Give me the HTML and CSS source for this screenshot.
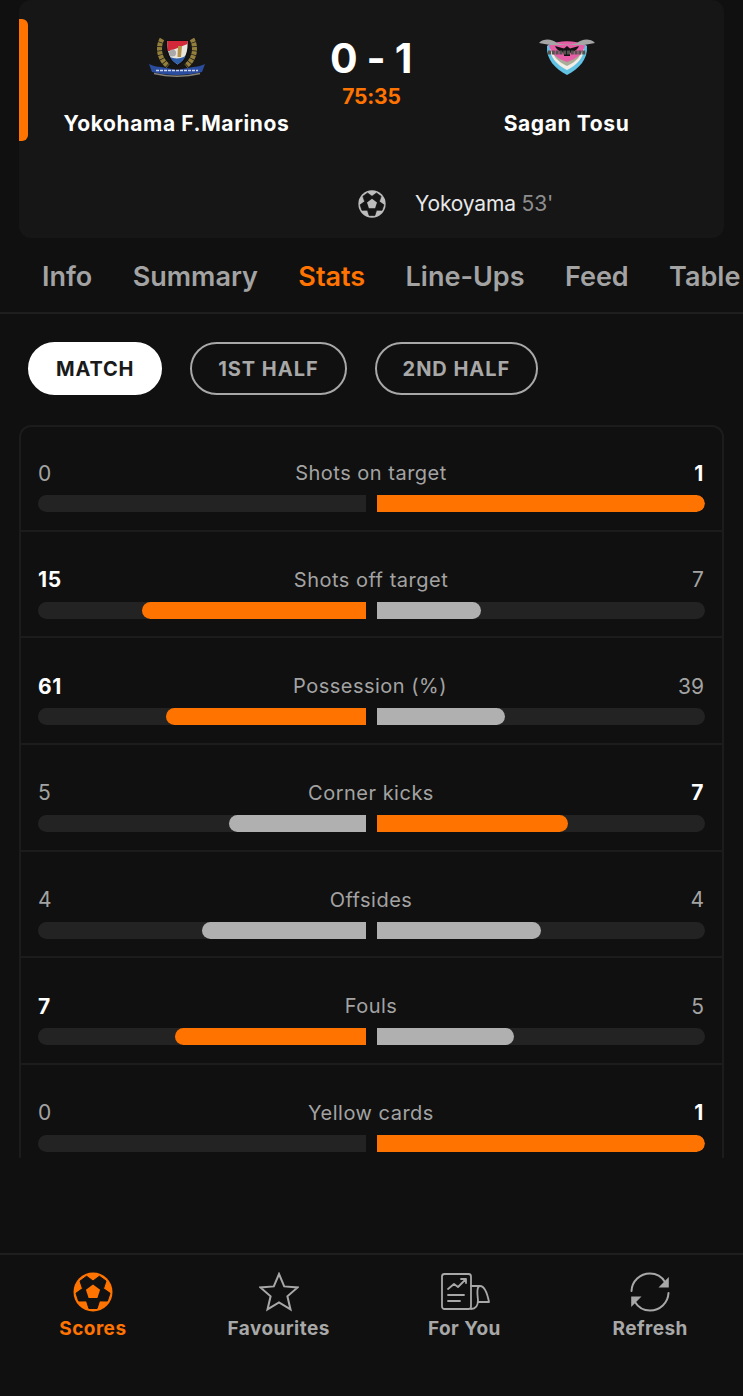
FILE: index.html
```html
<!DOCTYPE html>
<html lang="en">
<head>
<meta charset="utf-8">
<title>Yokohama F.Marinos vs Sagan Tosu</title>
<link rel="stylesheet" href="styles.css">
</head>
<body>
<div class="app">
  <main class="content">
    <section class="match">
      <span class="live-mark"></span>
      <div class="teams">
        <div class="team">
          <svg class="crest" viewBox="0 0 58 42" aria-hidden="true">
            <g fill="none" stroke="#94803c" stroke-width="5" stroke-dasharray="3.500 .7">
              <path d="M14 2C10 9 10 21 20 29"/>
              <path d="M44 2C48 9 48 21 38 29"/>
            </g>
            <path d="M18 3H41C42 14 40 23 29.500 29.500C19 23 17 14 18 3Z" fill="#111"/>
            <path d="M19.500 4H39.500C40 14 38 22 29.500 27.500C21 22 19 14 19.500 4Z" fill="#e8e6df"/>
            <path d="M19.500 4H39.500V7L22 14H19.500Z" fill="#d2283a"/>
            <path d="M22 20C26 22 33 22 37.500 19C36 23 33.500 25 29.500 27.500C26 25 23.500 23 22 20Z" fill="#2f5fa8"/>
            <circle cx="24.500" cy="16" r="3.500" fill="#a9a9a9"/>
            <path d="M30 9H34L33 20H29.500Z" fill="#b4924a"/>
            <path d="M1 27C5 29 9 30 13 30L29 33L45 30C49 30 53 29 57 27L54 35C46 37 38 38 29 38C20 38 12 37 4 35Z" fill="#2b4da0"/>
            <path d="M8 33.500H50" stroke="#cfd6ea" stroke-width="1.500" stroke-dasharray="3 1"/>
            <path d="M6 36.500C20 40 38 40 52 36.500" stroke="#85827a" stroke-width="1.500" fill="none"/>
          </svg>
          <span class="team-name">Yokohama F.Marinos</span>
        </div>
        <div class="score-box">
          <span class="score">0 - 1</span>
          <span class="clock">75:35</span>
        </div>
        <div class="team">
          <svg class="crest" viewBox="0 0 58 42" aria-hidden="true">
            <path d="M9 9C15 4 43 4 49 9C50 22 41 32 29 38C17 32 8 22 9 9Z" fill="#62c2e4"/>
            <path d="M12 9C17 5 41 5 46 9C47 20 39 28 29 33C19 28 11 20 12 9Z" fill="#f0eee6"/>
            <path d="M14 9C19 6 39 6 44 9C45 18 38 25 29 29C20 25 13 18 14 9Z" fill="#a9ad98"/>
            <path d="M11 8C20 3 38 3 47 8C46 16 38 22 29 25C20 22 12 16 11 8Z" fill="#e65fa6"/>
            <path d="M1 6C6 1 14 2 19 6C24 8 34 8 39 6C44 2 52 1 57 6L46 8H12Z" fill="#a6a6a6"/>
            <path d="M17 9L26 11.500L29 9L32 11.500L41 9C39 14 34 15 32 16V19H26V16C24 15 19 14 17 9Z" fill="#111"/>
            <path d="M10 15.500H48" stroke="#55534f" stroke-width="4" stroke-dasharray="3 .8"/>
          </svg>
          <span class="team-name">Sagan Tosu</span>
        </div>
      </div>
      <div class="scorer">
        <svg class="ball-small" viewBox="0 0 40 40" aria-hidden="true">
          <circle cx="20" cy="20" r="19.500" fill="#bdbdbd"/>
          <path d="M13.600 4.200L20 9L26.400 4.200L33 9.100L30.500 16.600L37 21.200L34.400 29L26.500 28.900L24.100 36.500H15.900L13.500 28.900L5.600 29L3 21.200L9.500 16.600L7 9.100Z" fill="#161616" stroke="#161616" stroke-linejoin="round"/>
          <path d="M20 12.500L27.100 17.700L24.400 26H15.600L12.900 17.700Z" fill="#bdbdbd"/>
        </svg>
        <span class="scorer-name">Yokoyama <span class="minute">53'</span></span>
      </div>
    </section>

    <nav class="tabs">
      <a class="tab">Info</a>
      <a class="tab">Summary</a>
      <a class="tab tab-active">Stats</a>
      <a class="tab">Line-Ups</a>
      <a class="tab">Feed</a>
      <a class="tab">Table</a>
    </nav>

    <div class="pills">
      <button class="pill pill-active">MATCH</button>
      <button class="pill">1ST HALF</button>
      <button class="pill">2ND HALF</button>
    </div>

    <section class="stats">
      <div class="stat">
        <div class="stat-head"><span class="val">0</span><span class="stat-name">Shots on target</span><span class="val val-lead">1</span></div>
        <div class="bars">
          <div class="track track-left"><span class="fill" style="width:0%"></span></div>
          <div class="track"><span class="fill fill-lead" style="width:100%"></span></div>
        </div>
      </div>
      <div class="stat">
        <div class="stat-head"><span class="val val-lead">15</span><span class="stat-name">Shots off target</span><span class="val">7</span></div>
        <div class="bars">
          <div class="track track-left"><span class="fill fill-lead" style="width:68.2%"></span></div>
          <div class="track"><span class="fill" style="width:31.8%"></span></div>
        </div>
      </div>
      <div class="stat">
        <div class="stat-head"><span class="val val-lead">61</span><span class="stat-name">Possession (%)</span><span class="val">39</span></div>
        <div class="bars">
          <div class="track track-left"><span class="fill fill-lead" style="width:61%"></span></div>
          <div class="track"><span class="fill" style="width:39%"></span></div>
        </div>
      </div>
      <div class="stat">
        <div class="stat-head"><span class="val">5</span><span class="stat-name">Corner kicks</span><span class="val val-lead">7</span></div>
        <div class="bars">
          <div class="track track-left"><span class="fill" style="width:41.7%"></span></div>
          <div class="track"><span class="fill fill-lead" style="width:58.3%"></span></div>
        </div>
      </div>
      <div class="stat">
        <div class="stat-head"><span class="val">4</span><span class="stat-name">Offsides</span><span class="val">4</span></div>
        <div class="bars">
          <div class="track track-left"><span class="fill" style="width:50%"></span></div>
          <div class="track"><span class="fill" style="width:50%"></span></div>
        </div>
      </div>
      <div class="stat">
        <div class="stat-head"><span class="val val-lead">7</span><span class="stat-name">Fouls</span><span class="val">5</span></div>
        <div class="bars">
          <div class="track track-left"><span class="fill fill-lead" style="width:58.3%"></span></div>
          <div class="track"><span class="fill" style="width:41.7%"></span></div>
        </div>
      </div>
      <div class="stat">
        <div class="stat-head"><span class="val">0</span><span class="stat-name">Yellow cards</span><span class="val val-lead">1</span></div>
        <div class="bars">
          <div class="track track-left"><span class="fill" style="width:0%"></span></div>
          <div class="track"><span class="fill fill-lead" style="width:100%"></span></div>
        </div>
      </div>
    </section>
  </main>

  <footer class="bottom-nav">
    <a class="nav-item nav-active">
      <svg class="nav-icon" viewBox="0 0 40 40" aria-hidden="true">
        <circle cx="20" cy="20" r="19.500" fill="#ff7300"/>
        <path d="M13.600 4.200L20 9L26.400 4.200L33 9.100L30.500 16.600L37 21.200L34.400 29L26.500 28.900L24.100 36.500H15.900L13.500 28.900L5.600 29L3 21.200L9.500 16.600L7 9.100Z" fill="#111" stroke="#111" stroke-linejoin="round"/>
        <path d="M20 12.500L27.100 17.700L24.400 26H15.600L12.900 17.700Z" fill="#ff7300"/>
      </svg>
      <span>Scores</span>
    </a>
    <a class="nav-item">
      <svg class="nav-icon" viewBox="0 0 40 40" aria-hidden="true">
        <path d="M20 2L25.200 14.400L38.600 15.500L28.400 24.300L31.500 37.400L20 30.400L8.500 37.400L11.600 24.300L1.400 15.500L14.800 14.400Z" fill="none" stroke="#a8a8a8" stroke-width="2" stroke-linejoin="miter"/>
      </svg>
      <span>Favourites</span>
    </a>
    <a class="nav-item">
      <svg class="nav-icon nav-icon-wide" viewBox="0 0 50 40" aria-hidden="true">
        <g fill="none" stroke="#a8a8a8" stroke-width="1.800" stroke-linecap="round" stroke-linejoin="round">
          <rect x="1" y="2" width="29" height="35" rx="2.500"/>
          <path d="M7 17L13 12L17 15L25 7M20 7H25V11"/>
          <path d="M7 23H23M7 29H19"/>
          <path d="M30 14H39C43 14 46 20 48 30H38M39 14C36 14 36 20 37 28C37 33 35 37 30 37"/>
        </g>
      </svg>
      <span>For You</span>
    </a>
    <a class="nav-item">
      <svg class="nav-icon" viewBox="0 0 40 40" aria-hidden="true">
        <g fill="none" stroke="#a8a8a8" stroke-width="2" stroke-linecap="round">
          <path d="M1.500 19C2 9 10 1.500 20 1.500C27 1.500 32 5 35 10"/>
          <path d="M38.500 21C38 31 30 38.500 20 38.500C13 38.500 8 35 5 30"/>
        </g>
        <path d="M38.800 5V15.500H28.500Z M1.200 35V24.500H11.500Z" fill="#a8a8a8"/>
      </svg>
      <span>Refresh</span>
    </a>
  </footer>
</div>
</body>
</html>
```

FILE: styles.css
```css
* { box-sizing: border-box; }

html, body {
  margin: 0;
  padding: 0;
  height: 100%;
  background: #101010;
}

body {
  font-family: Inter, "Liberation Sans", sans-serif;
  overflow: hidden;
}

.app {
  display: flex;
  flex-direction: column;
  height: 1396px;
}

.content {
  height: 1158px;
  overflow: hidden;
  flex: none;
}

.match {
  position: relative;
  height: 238px;
  margin: 0 19px;
  background: #161616;
  border-radius: 12px;
}

.live-mark {
  position: absolute;
  left: 0;
  top: 19px;
  width: 9px;
  height: 122px;
  background: #ff7300;
  border-radius: 0 6px 6px 0;
}

.teams {
  display: grid;
  grid-template-columns: 315px 75px 315px;
  height: 170px;
}

.team {
  display: flex;
  flex-direction: column;
  align-items: center;
  padding-top: 37px;
}

.crest {
  width: 58px;
  height: 42px;
  display: block;
}

.team-name {
  margin-top: 32px;
  font-size: 21px;
  line-height: 26px;
  font-weight: 700;
  letter-spacing: .62px;
  color: #fff;
  white-space: nowrap;
}

.score-box {
  display: flex;
  flex-direction: column;
  align-items: center;
  padding-top: 34px;
}

.score {
  font-size: 41px;
  line-height: 48px;
  font-weight: 700;
  letter-spacing: -.4px;
  margin-left: -1px;
  color: #fff;
  white-space: nowrap;
}

.clock {
  margin-top: 2px;
  font-size: 21px;
  line-height: 26px;
  font-weight: 700;
  letter-spacing: -.2px;
  color: #ff7300;
}

.scorer {
  display: flex;
  align-items: center;
  padding: 20px 0 0 339px;
}

.ball-small {
  width: 28px;
  height: 28px;
  flex: none;
}

.scorer-name {
  margin-left: 29px;
  font-size: 21px;
  line-height: 26px;
  letter-spacing: -.17px;
  color: #e8e8e8;
}

.minute { color: #8e8e8e; }

.tabs {
  display: flex;
  gap: 40.4px;
  height: 76px;
  padding: 4px 0 0 42px;
  align-items: center;
  border-bottom: 2px solid #1e1e1e;
  overflow: hidden;
}

.tab {
  font-size: 27px;
  line-height: 32px;
  font-weight: 600;
  color: #a3a3a3;
  white-space: nowrap;
}

.tab-active { color: #ff7300; }

.pills {
  display: flex;
  gap: 28px;
  padding: 28px 0 0 28px;
}

.pill {
  height: 53px;
  padding: 0 26px;
  border: 2px solid #a8a8a8;
  border-radius: 27px;
  background: transparent;
  color: #a8a8a8;
  font-family: inherit;
  font-size: 20px;
  font-weight: 700;
  letter-spacing: .95px;
  white-space: nowrap;
}

.pill-active {
  background: #fff;
  border-color: #fff;
  color: #1a1a1a;
  letter-spacing: .8px;
}

.stats {
  margin: 30px 19px 0 19px;
  border: 2px solid #1c1c1c;
  border-bottom: 0;
  border-radius: 12px 12px 0 0;
}

.stat {
  height: 106.67px;
  padding: 34px 17px 0;
  border-bottom: 2px solid #1c1c1c;
}

.stat:first-child { margin-top: -2px; }

.stat-head {
  display: flex;
  justify-content: space-between;
  align-items: center;
  height: 28px;
  padding-right: 1px;
}

.stat-name {
  font-size: 20px;
  color: #a3a3a3;
  letter-spacing: .5px;
}

.val {
  min-width: 24px;
  font-size: 21px;
  color: #a3a3a3;
}

.val:last-child { text-align: right; }

.val-lead {
  font-weight: 700;
  letter-spacing: .6px;
  color: #fff;
}

.bars {
  display: grid;
  grid-template-columns: 328px 328px;
  gap: 11px;
  margin-top: 8px;
}

.track {
  height: 17px;
  display: flex;
  background: #232323;
  border-radius: 0 9px 9px 0;
  overflow: hidden;
}

.track-left {
  justify-content: flex-end;
  border-radius: 9px 0 0 9px;
}

.fill {
  display: block;
  height: 100%;
  background: #b0b0b0;
  border-radius: 0 9px 9px 0;
}

.track-left .fill { border-radius: 9px 0 0 9px; }

.fill-lead { background: #ff7300; }

.bottom-nav {
  display: grid;
  grid-template-columns: repeat(4, 1fr);
  margin-top: 95px;
  flex: 1;
  border-top: 2px solid #1e1e1e;
  padding-top: 17px;
}

.nav-item {
  display: flex;
  flex-direction: column;
  align-items: center;
  color: #a8a8a8;
  font-size: 19px;
  line-height: 24px;
  font-weight: 700;
  letter-spacing: .45px;
}

.nav-icon {
  display: block;
  width: 40px;
  height: 40px;
  margin-bottom: 5px;
}

.nav-icon-wide {
  width: 50px;
  margin-left: 3px;
}

.nav-active { color: #ff7300; }
```
